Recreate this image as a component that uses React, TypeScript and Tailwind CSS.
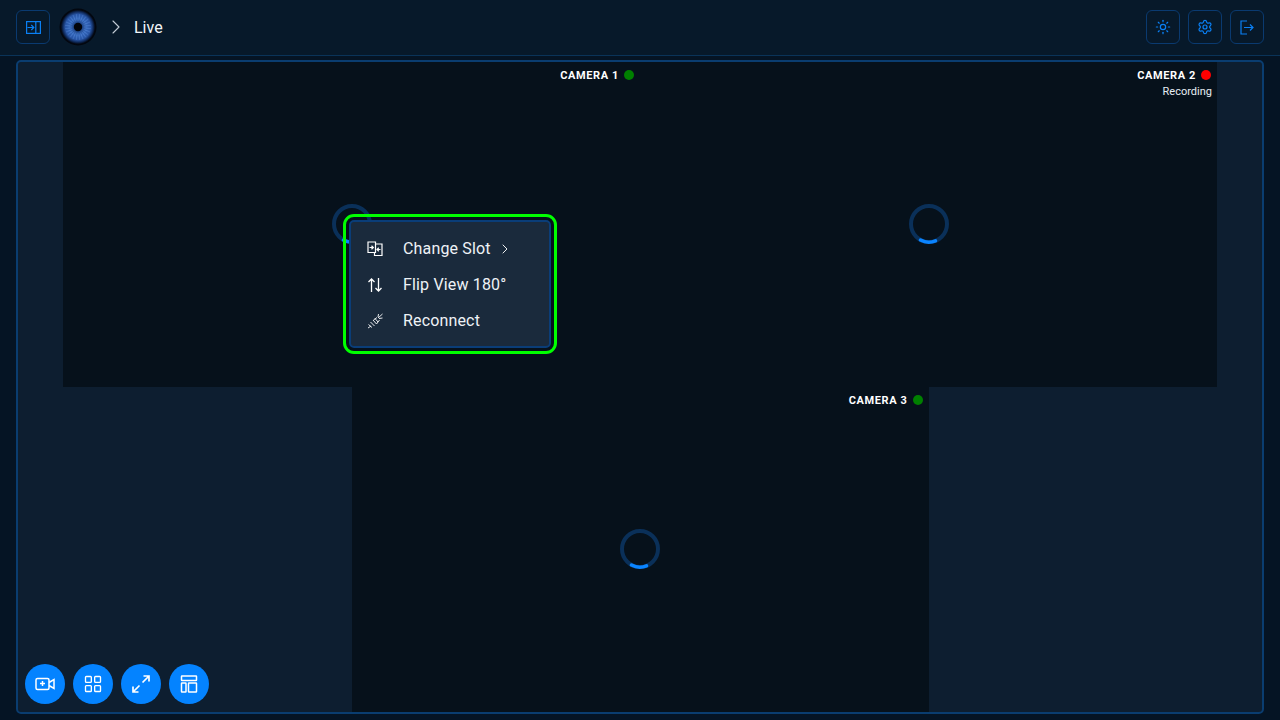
import { ChevronRight, LayoutGrid, Settings, Sun } from "lucide-react";
import type { ReactNode } from "react";

const fontClass = "font-['Roboto','Liberation_Sans',sans-serif]";

const Logo = () => {
  const rays = Array.from({ length: 48 }, (_, i) => (i * Math.PI * 2) / 48);
  return (
    <svg width="38" height="38" viewBox="0 0 38 38">
      <defs>
        <radialGradient id="iris">
          <stop offset="0.2" stopColor="#1a3f80" />
          <stop offset="0.45" stopColor="#3b6fc4" />
          <stop offset="0.68" stopColor="#2a58aa" />
          <stop offset="0.82" stopColor="#0f2a5c" />
          <stop offset="0.92" stopColor="#030812" />
          <stop offset="1" stopColor="#02050c" />
        </radialGradient>
      </defs>
      <circle cx="19" cy="19" r="18.5" fill="url(#iris)" />
      {rays.map((a, i) => (
        <line
          key={i}
          x1={19 + Math.cos(a) * 6}
          y1={19 + Math.sin(a) * 6}
          x2={19 + Math.cos(a) * 13}
          y2={19 + Math.sin(a) * 13}
          stroke={i % 2 ? "#6d9be0" : "#1f4a96"}
          strokeWidth="0.6"
          opacity="0.45"
        />
      ))}
      <circle cx="19" cy="19" r="4.2" fill="#02040a" />
    </svg>
  );
};

const HeaderButton = ({ children }: { children: ReactNode }) => (
  <button className="flex h-[34px] w-[34px] items-center justify-center rounded-md border border-[#0a3a70] text-[#0a80f5]">
    {children}
  </button>
);

const Spinner = () => (
  <svg width="40" height="40" viewBox="0 0 40 40" className="mb-[2px]">
    <circle cx="20" cy="20" r="18" fill="none" stroke="#0a3059" strokeWidth="4" />
    <path d="M11.5 36A18 18 0 0 0 26.5 36.8" fill="none" stroke="#0a84ff" strokeWidth="3.5" strokeLinecap="round" />
  </svg>
);

const Tile = ({ name, color, sub }: { name: string; color: string; sub?: string }) => (
  <div className="relative flex h-[325px] w-[577px] items-center justify-center bg-[#06111b]">
    <div className="absolute right-[6px] top-[6px] flex flex-col items-end text-white">
      <div className="flex items-start gap-[5px]">
        <span className="pt-[1px] text-[11px] font-bold leading-[14px] tracking-[0.055em]">{name}</span>
        <span className={`mt-[2px] h-[10px] w-[10px] rounded-full ${color}`} />
      </div>
      {sub && <span className="-mr-[1px] mt-[2px] text-[11px] leading-[14px] text-[#e6edf3]">{sub}</span>}
    </div>
    <Spinner />
  </div>
);

const MenuRow = ({ icon, label, arrow }: { icon: ReactNode; label: string; arrow?: boolean }) => (
  <div className="flex h-9 items-center pl-[16px] pt-[1px] text-white">
    <span className="flex w-[36px] shrink-0">{icon}</span>
    <span className="text-[16px] leading-none tracking-[0.01em] text-[#eef2f6]">{label}</span>
    {arrow && <ChevronRight size={16} strokeWidth={1.4} className="ml-[6px]" />}
  </div>
);

const Fab = ({ children }: { children: ReactNode }) => (
  <button className="flex h-10 w-10 items-center justify-center rounded-full bg-[#0483ff] text-white">{children}</button>
);

export default function App() {
  return (
    <div className={`flex h-[720px] w-[1280px] flex-col overflow-hidden bg-[#051424] ${fontClass}`}>
      {/* Header */}
      <header className="flex h-[56px] shrink-0 items-center justify-between border-b border-[#0a3358] bg-[#07192a] px-4 pb-[1px]">
        <div className="flex items-center">
          <HeaderButton>
            <svg width="15" height="13" viewBox="0 0 15 13" fill="none" stroke="currentColor" strokeWidth="1.2">
              <rect x="0.6" y="0.6" width="13.8" height="11.8" />
              <path d="M9.8 1v11M1.5 6.5h6M5.3 4 7.800 6.500 5.300 9" />
            </svg>
          </HeaderButton>
          <span className="ml-[9px] flex">
            <Logo />
          </span>
          <ChevronRight size={24} strokeWidth={1.1} className="ml-[7px] text-[#c3ccd6]" />
          <span className="ml-[6px] pt-[2px] text-[16px] text-[#f1f5f9]">Live</span>
        </div>
        <div className="flex items-center gap-2">
          <HeaderButton>
            <Sun size={16} strokeWidth={1.8} />
          </HeaderButton>
          <HeaderButton>
            <Settings size={16} strokeWidth={1.8} />
          </HeaderButton>
          <HeaderButton>
            <svg width="14" height="15" viewBox="0 0 14 15" fill="none" stroke="currentColor" strokeWidth="1.2">
              <path d="M7 1H1v13h6M4 7.500h9M10 4.500l3 3-3 3" />
            </svg>
          </HeaderButton>
        </div>
      </header>

      {/* Live grid */}
      <main className="mx-4 mt-[4px] h-[654px] rounded-[5px] border-2 border-[#0a3d70] bg-[#0d1e30]">
        <div className="relative flex h-full flex-col overflow-hidden">
          <div className="flex justify-center">
            <Tile name="CAMERA 1" color="bg-[#008000]" />
            <Tile name="CAMERA 2" color="bg-[#ff0000]" sub="Recording" />
          </div>
          <div className="flex justify-center">
            <Tile name="CAMERA 3" color="bg-[#008000]" />
          </div>

          {/* Context menu */}
          <div className="absolute left-[331px] top-[158px] h-[128px] w-[202px] rounded-[5px] border-2 border-[#0a3d78] bg-[#1a2a3c] py-[8px] outline-[3px] outline-offset-[3px] outline-[#00ff00]">
            <MenuRow
              label="Change Slot"
              arrow
              icon={
                <svg width="16" height="16" viewBox="0 0 16 16" fill="none" stroke="white" strokeWidth="1.2">
                  <path d="M1 1h7.500v10.500H1zM8.500 3H15v11.500H7.500v-3" />
                  <path d="M2.500 6.500h3.500M4.500 4.800 6.300 6.500 4.500 8.200M13.500 8.500H10M11.800 6.800 10 8.500l1.800 1.700" />
                </svg>
              }
            />
            <MenuRow
              label="Flip View 180°"
              icon={
                <svg width="16" height="16" viewBox="0 0 16 16" fill="none" stroke="white" strokeWidth="1.3">
                  <path d="M4.500 15V2M1.500 5l3-3 3 3M11.500 1v13M8.500 11l3 3 3-3" />
                </svg>
              }
            />
            <MenuRow
              label="Reconnect"
              icon={
                <svg width="16" height="16" viewBox="0 0 16 16" fill="none" stroke="white" strokeWidth="0.9">
                  <path d="M1 15l3-2M1.500 11.500 5 14.500M3.500 9l4 4M6 7l3.500 4M8 5.500l3 3.500M15.500 1l-4.500 4M11.500 1l-.5 3M15.500 5l-3.500.5M10 4.500 6.500 7M12.500 7l-3 4" />
                </svg>
              }
            />
          </div>

          {/* Floating actions */}
          <div className="absolute bottom-[8px] left-[7px] flex gap-2">
            <Fab>
              <svg width="20" height="20" viewBox="0 0 20 20" fill="none" stroke="currentColor" strokeWidth="1.5">
                <rect x="1" y="4.500" width="13" height="11" rx="1.500" />
                <path d="M14 8.500 19 5.500v9L14 11.500M7.500 7v5M5 9.500h5" />
              </svg>
            </Fab>
            <Fab>
              <LayoutGrid size={20} strokeWidth={1.6} />
            </Fab>
            <Fab>
              <svg width="20" height="20" viewBox="0 0 20 20" fill="none" stroke="currentColor" strokeWidth="1.7">
                <path d="M11.500 8.500 18 2M12.500 2H18v5.500M8.500 11.500 2 18M2 12.500V18h5.500" />
              </svg>
            </Fab>
            <Fab>
              <svg width="20" height="20" viewBox="0 0 20 20" fill="none" stroke="currentColor" strokeWidth="1.5">
                <rect x="2.500" y="2" width="15" height="4.500" rx="0.500" />
                <rect x="2.500" y="9" width="4.500" height="9" rx="0.500" />
                <rect x="9.500" y="9" width="8" height="9" rx="0.500" />
              </svg>
            </Fab>
          </div>
        </div>
      </main>
    </div>
  );
}
